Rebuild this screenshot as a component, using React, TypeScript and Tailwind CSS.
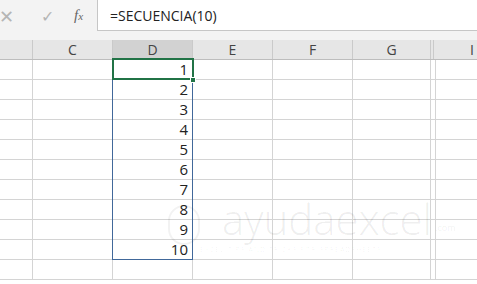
import React from "react";

const cols = [
  { key: "B", label: "", w: "w-[33px]" },
  { key: "C", label: "C", w: "w-[80px]" },
  { key: "D", label: "D", w: "w-[80px]" },
  { key: "E", label: "E", w: "w-[80px]" },
  { key: "F", label: "F", w: "w-[80px]" },
  { key: "G", label: "G", w: "w-[78px]" },
  { key: "H", label: "", w: "w-[3px]" },
  { key: "I", label: "I", w: "flex-1" },
];

const rows = [1, 2, 3, 4, 5, 6, 7, 8, 9, 10, null];

export default function App() {
  return (
    <div
      className="relative w-[477px] h-[284px] overflow-hidden bg-white text-[#222]"
      style={{ fontFamily: '"Open Sans", "Noto Sans", sans-serif' }}
    >
      {/* ───────── formula bar ───────── */}
      <div className="flex h-[40px] bg-[#f3f3f3]">
        <div className="flex w-[97px] h-[31px] items-center text-[#b5b5b5]">
          <span className="ml-[-1px] text-[18px] leading-none">✕</span>
          <span className="ml-[27px] text-[16px] leading-none">✓</span>
          <span
            className="ml-[20px] text-[15px] italic text-[#666]"
            style={{ fontFamily: '"Liberation Serif", serif' }}
          >
            f<span className="text-[11px]">x</span>
          </span>
        </div>
        <div className="flex-1 h-[31px] bg-white border border-t-0 border-r-0 border-[#c6c6c6] flex items-center pl-[12px] text-[14px] text-[#222]">
          =SECUENCIA(10)
        </div>
      </div>

      {/* ───────── column headers ───────── */}
      <div className="flex h-[20px] bg-[#e6e6e6] border-b border-[#bdbdbd]">
        {cols.map((c) => (
          <div
            key={c.key}
            className={`${c.w} shrink-0 border-r border-[#cacaca] flex items-center justify-center text-[14px] text-[#444] ${
              c.key === "D" ? "bg-[#d2d2d2]" : ""
            } ${c.key === "I" ? "justify-end pr-[3px] border-r-0" : ""}`}
          >
            {c.label}
          </div>
        ))}
      </div>

      {/* ───────── grid rows ───────── */}
      {rows.map((n, i) => (
        <div key={i} className="flex h-[20px] border-b border-[#d4d4d4]">
          {cols.map((c) => (
            <div
              key={c.key}
              className={`${c.w} shrink-0 border-r border-[#d4d4d4] flex items-center justify-end pr-[4px] text-[15px] ${
                c.key === "I" ? "border-r-0" : ""
              }`}
            >
              {c.key === "D" ? n : null}
            </div>
          ))}
        </div>
      ))}

      {/* ───────── selection overlays ───────── */}
      <div className="absolute left-[112px] top-[59px] w-[81px] h-[201px] border border-[#41689a] pointer-events-none" />
      <div className="absolute left-[112px] top-[58px] w-[82px] h-[22px] border-2 border-[#217346] pointer-events-none" />
      <div className="absolute left-[190px] top-[77px] w-[6px] h-[6px] bg-[#217346] border border-white" />

      {/* ───────── watermark ───────── */}
      <div className="absolute left-[168px] top-[205px] w-[32px] h-[40px] rounded-full border-[2px] border-black/[0.05] pointer-events-none" />
      <div className="absolute left-[222px] top-[198px] flex items-end whitespace-nowrap pointer-events-none text-black/[0.07]">
        <span className="text-[42px] font-light leading-none">ayudaexcel</span>
        <span className="text-[9px] ml-[3px] mb-[6px]">.com</span>
      </div>
      <div className="absolute left-[200px] top-[246px] w-[260px] overflow-hidden whitespace-nowrap text-[7px] leading-[8px] tracking-[1px] text-black/[0.05] pointer-events-none">
        EXCEL TIPS AND TRICKS FOR SPREADSHEETS
      </div>
    </div>
  );
}
